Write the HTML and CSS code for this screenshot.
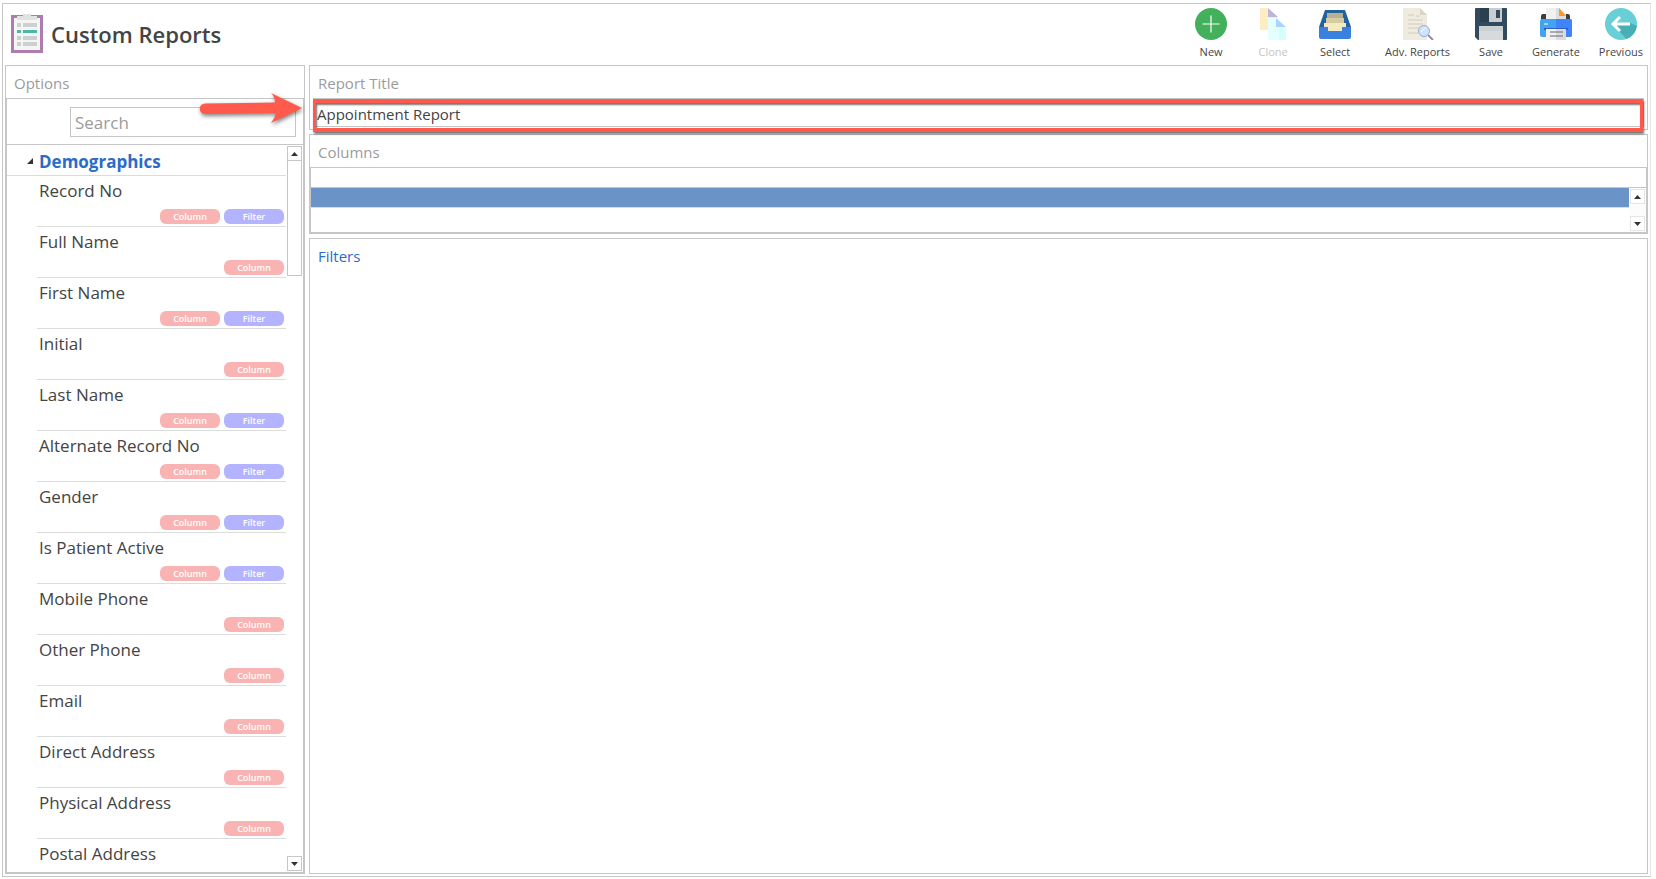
FILE: index.html
```html
<!DOCTYPE html>
<html lang="en">
<head>
    <meta charset="UTF-8">
    <title>Custom Reports</title>
    <link rel="stylesheet" href="styles.css">
</head>
<body>
    <div class="window">
        <!-- Header -->
        <header class="header">
            <svg class="logo" width="34" height="40" viewBox="0 0 34 40">
                <rect x="1" y="1" width="32" height="38" fill="#ad7bad"/>
                <rect x="4" y="4" width="26" height="32" fill="#f5f5f4"/>
                <path d="M7 6V2h6V0h8v2h6v4z" fill="#dfe3e2"/>
                <path d="M7 9h4v4H7zm6 0h14v4H13zM7 22h4v4H7zm6 0h14v4H13zM7 28h4v4H7zm6 0h14v4H13z" fill="#cdd0d3"/>
                <path d="M7 16h4v3H7zm6 0h14v3H13z" fill="#4ab9a5"/>
            </svg>
            <h1>Custom Reports</h1>

            <nav class="toolbar">
                <button type="button" class="tool">
                    <svg width="32" height="32" viewBox="0 0 32 32">
                        <circle cx="16" cy="16" r="16" fill="#43b05c"/>
                        <path d="M16 7.500v17M7.500 16h17" stroke="#fff" stroke-width="1.200"/>
                    </svg>
                    <span>New</span>
                </button>
                <button type="button" class="tool" disabled>
                    <svg width="32" height="32" viewBox="0 0 32 32">
                        <path d="M3 0h8v9h9v5h-9v8H3z" fill="#fceec2"/>
                        <path d="M11 0l10 9H11z" fill="#bfb5d8"/>
                        <path d="M11 10h9v9h9v13H11z" fill="#e3fffe"/>
                        <path d="M22 19h7v13H22z" fill="#d5fffc"/>
                        <path d="M19 10l10 9H19z" fill="#a8d5f8"/>
                    </svg>
                    <span>Clone</span>
                </button>
                <button type="button" class="tool">
                    <svg width="32" height="32" viewBox="0 0 32 32">
                        <path d="M6 2h20l6 17v8H0v-8z" fill="#23629d"/>
                        <path d="M9 5h14l3 14H6z" fill="#194f7d"/>
                        <path d="M8 5h16v5H8z" fill="#b8b090"/>
                        <path d="M7 10h18v5H7z" fill="#d6cca4"/>
                        <path d="M5 15h22v9H5z" fill="#f3eac0"/>
                        <path d="M0 19h9v4h14v-4h9v10q0 2-2 2H2q-2 0-2-2z" fill="#3981e0"/>
                    </svg>
                    <span>Select</span>
                </button>
                <button type="button" class="tool tool-adv">
                    <svg width="32" height="32" viewBox="0 0 32 32">
                        <path d="M1 0h17l7 7v25H1z" fill="#efebde"/>
                        <path d="M18 0l7 7h-7z" fill="#dcd5c2"/>
                        <path d="M6 7h6m2 1h4M6 12h15M6 16h15M6 20h11M6 25h10" stroke="#d3ccbb"/>
                        <path d="M26 27l5 5" stroke="#9b88a8" stroke-width="2"/>
                        <circle cx="22" cy="23" r="5.500" fill="#cfe4fb" stroke="#92aee0"/>
                        <path d="M19 24l4-4" stroke="#fff"/>
                    </svg>
                    <span>Adv. Reports</span>
                </button>
                <button type="button" class="tool">
                    <svg width="32" height="32" viewBox="0 0 32 32">
                        <path d="M1 0h30q1 0 1 1v30q0 1-1 1H3l-3-3V1q0-1 1-1z" fill="#324a5e"/>
                        <path d="M5 0h9v14H5z" fill="#2b404f"/>
                        <path d="M14 0h13v13q0 1-1 1H14z" fill="#c9cdd2"/>
                        <path d="M21 2h4v8h-4z" fill="#324a5e"/>
                        <path d="M4 32V19q0-1 1-1h22q1 0 1 1v13z" fill="#d7dadd"/>
                        <path d="M4 23v-4q0-1 1-1h22q1 0 1 1v4z" fill="#cbd0d4"/>
                    </svg>
                    <span>Save</span>
                </button>
                <button type="button" class="tool">
                    <svg width="32" height="32" viewBox="0 0 32 32">
                        <path d="M3 6h3v6H1V8q0-2 2-2zm23 0h2q2 0 2 2v4h-4z" fill="#3c3c44"/>
                        <path d="M6 0h13l7 7v6H6z" fill="#f0f0f0"/>
                        <path d="M16 0h3l7 7v6H16z" fill="#dddde0"/>
                        <path d="M19 0l7 8h-7z" fill="#fd9827"/>
                        <path d="M2 11h28q2 0 2 2v14q0 2-2 2H2q-2 0-2-2V13q0-2 2-2z" fill="#41a3f2"/>
                        <path d="M16 11h14q2 0 2 2v14q0 2-2 2H16z" fill="#3f84fb"/>
                        <path d="M4 20h24v2H4z" fill="#315ec0"/>
                        <path d="M6 21h20v11H6z" fill="#f1f1f1"/>
                        <path d="M16 21h10v11H16z" fill="#dcdce0"/>
                        <path d="M10 24h13M10 28h13" stroke="#68686d"/>
                        <path d="M4 16h4" stroke="#fff"/>
                    </svg>
                    <span>Generate</span>
                </button>
                <button type="button" class="tool">
                    <svg width="32" height="32" viewBox="0 0 32 32">
                        <circle cx="16" cy="16" r="16" fill="#68cfd7"/>
                        <path d="M9 18L21.500 31Q30 28 32 18L25 15z" fill="#49afb6"/>
                        <path d="M15 9l-7 7 7 7M9 16h16" fill="none" stroke="#fff" stroke-width="3"/>
                    </svg>
                    <span>Previous</span>
                </button>
            </nav>
        </header>

        <main class="content">
            <!-- Options -->
            <aside class="options">
                <h2 class="panel-title">Options</h2>
                <div class="options-body">
                    <div class="search-row">
                        <input type="text" class="search" placeholder="Search" aria-label="Search">
                    </div>
                    <svg class="arrow" width="112" height="38" viewBox="0 0 112 38">
                        <path d="M7 11.500L77 10.500Q77 5 73 1L104 16 73 31Q77 26 78 21L7 22A5 5 0 0 1 7 11.500z" fill="#ff5a4b"/>
                    </svg>
                    <div class="list">
                        <details class="group" open>
                            <summary>
                                <svg width="6" height="6" viewBox="0 0 6 6"><path d="M6 0v6H0z" fill="#333"/></svg>
                                Demographics
                            </summary>
                            <ul>
                                <li><span>Record No</span><div class="tags"><button type="button" class="tag column">Column</button><button type="button" class="tag filter">Filter</button></div></li>
                                <li><span>Full Name</span><div class="tags"><button type="button" class="tag column">Column</button></div></li>
                                <li><span>First Name</span><div class="tags"><button type="button" class="tag column">Column</button><button type="button" class="tag filter">Filter</button></div></li>
                                <li><span>Initial</span><div class="tags"><button type="button" class="tag column">Column</button></div></li>
                                <li><span>Last Name</span><div class="tags"><button type="button" class="tag column">Column</button><button type="button" class="tag filter">Filter</button></div></li>
                                <li><span>Alternate Record No</span><div class="tags"><button type="button" class="tag column">Column</button><button type="button" class="tag filter">Filter</button></div></li>
                                <li><span>Gender</span><div class="tags"><button type="button" class="tag column">Column</button><button type="button" class="tag filter">Filter</button></div></li>
                                <li><span>Is Patient Active</span><div class="tags"><button type="button" class="tag column">Column</button><button type="button" class="tag filter">Filter</button></div></li>
                                <li><span>Mobile Phone</span><div class="tags"><button type="button" class="tag column">Column</button></div></li>
                                <li><span>Other Phone</span><div class="tags"><button type="button" class="tag column">Column</button></div></li>
                                <li><span>Email</span><div class="tags"><button type="button" class="tag column">Column</button></div></li>
                                <li><span>Direct Address</span><div class="tags"><button type="button" class="tag column">Column</button></div></li>
                                <li><span>Physical Address</span><div class="tags"><button type="button" class="tag column">Column</button></div></li>
                                <li><span>Postal Address</span></li>
                            </ul>
                        </details>
                        <div class="scrollbar">
                            <button type="button" class="scroll-btn" aria-label="Scroll up"><svg width="7" height="4" viewBox="0 0 7 4"><path d="M0 4l3.500-4L7 4z" fill="#333"/></svg></button>
                            <div class="thumb"></div>
                            <button type="button" class="scroll-btn down" aria-label="Scroll down"><svg width="7" height="4" viewBox="0 0 7 4"><path d="M0 0l3.500 4L7 0z" fill="#333"/></svg></button>
                        </div>
                    </div>
                </div>
            </aside>

            <!-- Report -->
            <section class="report">
                <div class="panel title-panel">
                    <label class="panel-title" for="reportTitle">Report Title</label>
                    <input type="text" id="reportTitle" class="report-title" value="Appointment Report">
                    <div class="highlight"></div>
                </div>

                <div class="panel">
                    <h2 class="panel-title">Columns</h2>
                    <div class="columns-grid">
                        <div class="grid-head"></div>
                        <div class="grid-body">
                            <div class="grid-rows">
                                <div class="grid-row selected"></div>
                            </div>
                            <div class="grid-scroll">
                                <button type="button" class="scroll-btn light" aria-label="Scroll up"><svg width="7" height="4" viewBox="0 0 7 4"><path d="M0 4l3.500-4L7 4z" fill="#333"/></svg></button>
                                <button type="button" class="scroll-btn light" aria-label="Scroll down"><svg width="7" height="4" viewBox="0 0 7 4"><path d="M0 0l3.500 4L7 0z" fill="#333"/></svg></button>
                            </div>
                        </div>
                    </div>
                </div>

                <div class="panel filters">
                    <h2 class="panel-title blue">Filters</h2>
                </div>
            </section>
        </main>
    </div>
</body>
</html>
```
FILE: styles.css
```css
/* General */
* {
    margin: 0;
    padding: 0;
    box-sizing: border-box;
    font-family: "Open Sans", "Noto Sans", sans-serif;
}

body {
    display: flex;
    height: 100vh;
    padding: 3px 5px 2px 2px;
    background-color: #fff;
    color: #444;
}

button, input {
    border: none;
    background: none;
    color: inherit;
}

.window {
    display: flex;
    flex-direction: column;
    flex: 1;
    min-width: 0;
    border: 1px solid #c6c6c6;
    border-right-color: #e6e6e6;
}

/* Header */
.header {
    display: flex;
    flex: none;
    height: 61px;
    padding-left: 7px;
}

.logo {
    margin-top: 10px;
}

h1 {
    margin-left: 7px;
    font-size: 22px;
    font-weight: 600;
    line-height: 60px;
}

.toolbar {
    display: flex;
    gap: 5px;
    margin-left: auto;
}

.tool {
    display: flex;
    flex-direction: column;
    align-items: center;
    min-width: 58px;
    padding: 4px 7px 0;
    font-size: 11px;
    line-height: 24px;
    cursor: pointer;
}

.tool svg {
    flex: none;
}

.tool:disabled {
    min-width: 56px;
    color: #c4c4c4;
    cursor: default;
}

.tool-adv {
    margin-left: 9px;
}

/* Panels */
.content {
    display: flex;
    flex: 1;
    gap: 4px;
    min-height: 0;
    padding: 0 2px 2px;
}

.panel-title {
    display: block;
    height: 32px;
    padding-left: 8px;
    color: #9b9b9b;
    font-size: 15px;
    font-weight: 400;
    line-height: 35px;
}

.panel-title.blue {
    color: #2b6cc8;
}

.options {
    display: flex;
    flex-direction: column;
    width: 300px;
    border: 1px solid #c6c6c6;
}

.options-body {
    position: relative;
    display: flex;
    flex-direction: column;
    flex: 1;
    min-height: 0;
    border: 1px solid #c6c6c6;
}

.search-row {
    flex: none;
    height: 46px;
    padding: 8px 7px 0 63px;
    border-bottom: 1px solid #c6c6c6;
}

.search {
    display: block;
    width: 100%;
    height: 30px;
    padding: 0 4px;
    border: 1px solid #c6c6c6;
    font-size: 17px;
}

.search::placeholder {
    color: #9b9b9b;
}

.arrow {
    position: absolute;
    top: -7px;
    right: -7px;
    filter: drop-shadow(1px 2px 2px rgba(0, 0, 0, 0.5));
}

/* Field list */
.list {
    display: flex;
    flex: 1;
    gap: 1px;
    min-height: 0;
    padding-right: 1px;
}

.group {
    flex: 1;
    overflow: hidden;
}

summary {
    display: flex;
    align-items: center;
    gap: 6px;
    height: 31px;
    padding: 2px 0 0 20px;
    border-bottom: 1px solid #dcdcdc;
    color: #2b6cc8;
    font-size: 17px;
    font-weight: 700;
    cursor: pointer;
}

ul {
    padding-left: 30px;
    list-style: none;
}

li {
    height: 51px;
    padding: 3px 2px 0;
    border-bottom: 1px solid #dcdcdc;
    font-size: 17px;
    line-height: 24px;
}

li:last-child {
    border-bottom: none;
}

.tags {
    display: flex;
    justify-content: flex-end;
    gap: 4px;
    margin-top: 6px;
}

.tag {
    width: 60px;
    height: 15px;
    border-radius: 6px;
    color: #fff;
    font-size: 9px;
    font-weight: 600;
    line-height: 15px;
    cursor: pointer;
}

.column {
    background-color: #f9b3b3;
}

.filter {
    background-color: #b3b3ff;
}

/* Scrollbars */
.scrollbar {
    display: flex;
    flex-direction: column;
    width: 15px;
    padding: 1px 0;
}

.scroll-btn {
    display: flex;
    align-items: center;
    justify-content: center;
    flex: none;
    width: 15px;
    height: 15px;
    border: 1px solid #c6c6c6;
}

.scroll-btn.light {
    border-color: #e6e6e6;
    background-color: #fff;
}

.scroll-btn.down {
    margin-top: auto;
}

.thumb {
    height: 116px;
    margin-top: -1px;
    border: 1px solid #c6c6c6;
}

/* Report */
.report {
    display: flex;
    flex-direction: column;
    flex: 1;
    gap: 4px;
    min-width: 0;
}

.panel {
    flex: none;
    border: 1px solid #c6c6c6;
}

.title-panel {
    position: relative;
    height: 65px;
    padding: 0 3px;
}

.title-panel .panel-title {
    padding-left: 5px;
}

.report-title {
    display: block;
    width: 100%;
    height: 29px;
    padding: 2px 3px 0;
    border: 1px solid #c6c6c6;
    font-size: 15px;
}

.highlight {
    position: absolute;
    top: 33px;
    right: 4px;
    bottom: -3px;
    left: 3px;
    border: 4px solid #ff5a4b;
    border-width: 4px 3px;
    box-shadow: 1px 2px 2px rgba(0, 0, 0, 0.55), inset 1px 2px 2px rgba(0, 0, 0, 0.55);
    pointer-events: none;
}

.columns-grid {
    height: 66px;
    border: 1px solid #c6c6c6;
}

.grid-head {
    height: 20px;
    border-bottom: 1px solid #c6c6c6;
}

.grid-body {
    display: flex;
    height: 44px;
}

.grid-rows {
    flex: 1;
}

.grid-row {
    height: 20px;
    border-bottom: 1px solid #dcdcdc;
}

.grid-row.selected {
    background-color: #6a93c7;
}

.grid-scroll {
    display: flex;
    flex-direction: column;
    justify-content: space-between;
    padding: 1px;
    background-color: #fcfcfc;
}

.filters {
    flex: 1;
}
```
